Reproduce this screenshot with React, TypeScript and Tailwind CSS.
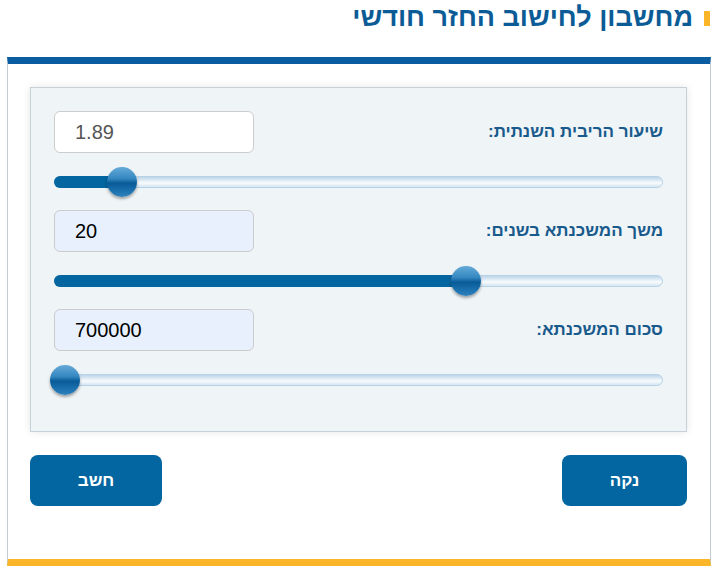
import React, { useState } from "react";

interface SliderRowProps {
  label: string;
  value: string;
  pos: number; // 0..1, thumb position along the track
  muted?: boolean;
}

function Slider({ pos }: { pos: number }) {
  // thumb center runs from 10px to (width - 10px) of the track
  const left = `calc(10px + (100% - 20px) * ${pos})`;
  return (
    <div className="flex h-[57px] items-center">
      <div className="relative h-[12px] w-full rounded-full border border-[#b9d3e6] bg-[linear-gradient(to_bottom,#bcd6e9_0%,#e9f2f8_45%,#f8fbfd_60%,#d5e6f1_100%)]">
        <div
          className="absolute -left-px -top-px h-[12px] rounded-full bg-[#0466a0]"
          style={{ width: `calc(${left} + 1px)` }}
        />
        <div
          className="absolute top-1/2 h-[30px] w-[30px] -translate-x-1/2 -translate-y-1/2 rounded-full bg-[linear-gradient(to_bottom,#64aad8_0%,#3688c2_38%,#085b97_54%,#1a6fad_78%,#2f82bc_100%)] shadow-[0_2px_3px_rgba(0,0,0,0.35)]"
          style={{ left }}
        />
      </div>
    </div>
  );
}

function SliderRow({ label, value, pos, muted }: SliderRowProps) {
  return (
    <div>
      <div className="flex h-[42px] items-center justify-between">
        <label className="text-[17px] font-bold text-[#195a8c]">{label}</label>
        <input
          dir="ltr"
          readOnly
          value={value}
          className={
            muted
              ? "h-[42px] w-[200px] rounded-[6px] border border-[#cccccc] bg-white pl-[20px] text-[20px] text-[#555555] outline-none"
              : "h-[42px] w-[200px] rounded-[6px] border border-[#cccccc] bg-[#e8f0fe] pl-[20px] text-[20px] text-black outline-none"
          }
        />
      </div>
      <Slider pos={pos} />
    </div>
  );
}

export default function App() {
  const [rows] = useState([
    { label: "שיעור הריבית השנתית:", value: "1.89", pos: 0.0968, muted: true },
    { label: "משך המשכנתא בשנים:", value: "20", pos: 0.6825 },
    { label: "סכום המשכנתא:", value: "700000", pos: 0 },
  ]);

  return (
    <div
      dir="rtl"
      className="h-[573px] w-[715px] bg-white font-['Liberation_Sans',Arial,sans-serif]"
    >
      <div className="flex h-[57px] items-start pr-[5px] pt-[2px]">
        <h1 className="flex items-center gap-[11px] text-[27px] font-bold leading-[30px] text-[#0b5c96]">
          <span className="mt-[2px] h-[15px] w-[6px] bg-[#fbb528]" />
          מחשבון לחישוב החזר חודשי
        </h1>
      </div>
      <div className="ml-[7px] mr-[4px] h-[509px] border-x border-b-[7px] border-t-[7px] border-x-[#c0ccd6] border-b-[#fbb528] border-t-[#0a5da0]">
        <div className="pl-[22px] pr-[23px] pt-[23px]">
          <div className="border border-[#c5d0d8] bg-[#eff4f7] p-[23px] shadow-[0_0_8px_rgba(0,0,0,0.1)]">
            {rows.map((r, i) => (
              <SliderRow key={i} {...r} />
            ))}
          </div>
          <div className="mt-[23px] flex justify-between">
            <button className="h-[51px] w-[125px] rounded-[8px] bg-[#0366a0] text-[17px] font-bold text-white">
              נקה
            </button>
            <button className="h-[51px] w-[132px] rounded-[8px] bg-[#0366a0] text-[17px] font-bold text-white">
              חשב
            </button>
          </div>
        </div>
      </div>
    </div>
  );
}
